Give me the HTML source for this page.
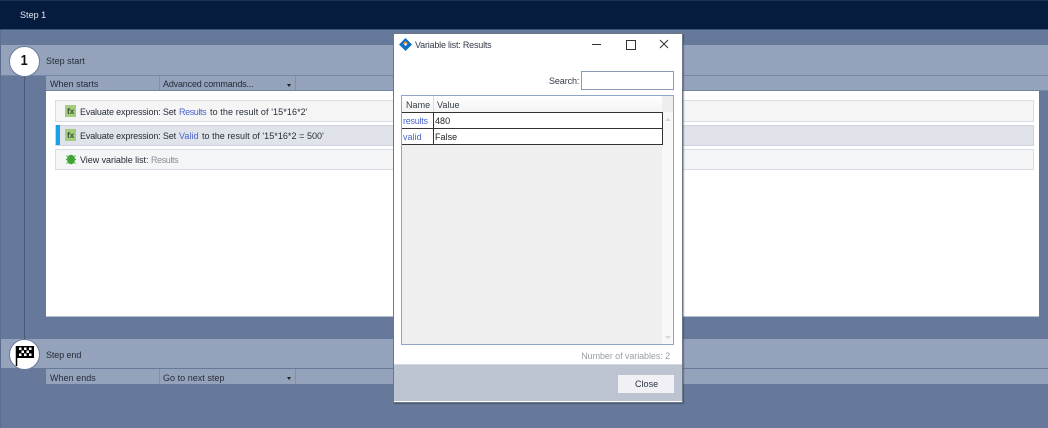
<!DOCTYPE html>
<html><head><meta charset="utf-8"><style>
html,body{margin:0;padding:0}
body{width:1048px;height:428px;overflow:hidden;position:relative;background:#66799b;font-family:"Liberation Sans",sans-serif;font-size:9px;color:#262c38}
div,span.t,svg{position:absolute}
.t{white-space:nowrap;line-height:12px;letter-spacing:.03px}
.b{color:#4a63c8}
.e{letter-spacing:-.15px}
</style></head><body>
<div style="left:0;top:0;width:1048px;height:29px;background:#061c3e;border-top:1px solid #1c3352;box-sizing:border-box"></div>
<div style="left:0;top:29px;width:1048px;height:1px;background:#3f5377"></div>
<div style="left:0;top:30px;width:1px;height:398px;background:#5b6e90"></div>
<span class="t" style="left:20px;top:9px;color:#e4e9f2">Step 1</span>

<div style="left:1px;top:45px;width:1047px;height:30px;background:#94a2bc"></div>
<div style="left:1px;top:75px;width:1047px;height:1px;background:#7485a6"></div>
<div style="left:46px;top:76px;width:1002px;height:14px;background:#94a2bc"></div>
<div style="left:46px;top:90px;width:1002px;height:1px;background:#7485a6"></div>
<div style="left:159px;top:76px;width:1px;height:14px;background:#7f8faf"></div>
<div style="left:295px;top:76px;width:1px;height:14px;background:#7f8faf"></div>
<div style="left:24px;top:75px;width:1px;height:264px;background:#46597b"></div>
<div style="left:9px;top:46px;width:29px;height:29px;border-radius:50%;background:#fff;border:1px solid #6b7c9c;box-sizing:content-box"></div>
<span class="t" style="left:20px;top:53px;font-size:15px;line-height:15px;color:#111;font-weight:bold;transform:scaleX(.85)">1</span>
<span class="t" style="left:46px;top:55px">Step start</span>
<span class="t" style="left:50px;top:78px">When starts</span>
<span class="t" style="left:163px;top:78px;letter-spacing:-.18px">Advanced commands...</span>
<div style="left:287px;top:84px;width:0;height:0;border:2.5px solid transparent;border-top:3px solid #222;border-bottom:0"></div>

<div style="left:46px;top:91px;width:993px;height:225px;background:#fff;border-bottom:1px solid #b4bfd2"></div>

<div style="left:55px;top:100px;width:979px;height:22px;box-sizing:border-box;background:#f5f5f6;border:1px solid #dadde5"></div>
<div style="left:55px;top:125px;width:979px;height:21px;box-sizing:border-box;background:#e0e3ea;border:1px solid #cfd3dd"></div>
<div style="left:56px;top:125px;width:4px;height:20px;background:#18a3e8"></div>
<div style="left:55px;top:149px;width:979px;height:21px;box-sizing:border-box;background:#f4f5f7;border:1px solid #dadde5"></div>

<div style="left:65px;top:105px;width:11px;height:12px;background:#a4cc7e"></div>
<span class="t" style="left:67px;top:105px;font-size:8.500px;font-weight:bold;line-height:12px;color:#3c5530;letter-spacing:-.2px">fx</span>
<div style="left:65px;top:129px;width:11px;height:12px;background:#a4cc7e"></div>
<span class="t" style="left:67px;top:129px;font-size:8.500px;font-weight:bold;line-height:12px;color:#3c5530;letter-spacing:-.2px">fx</span>
<svg style="left:65px;top:154px" width="12" height="11" viewBox="0 0 12 11"><path d="M2.500 2.500 1.500 1.500M9.500 2.500 10.500 1.500M2 5.500H1M10 5.500h1M2.500 8.500 1.500 9.500M9.500 8.500 10.500 9.500" stroke="#4aa53e" stroke-width="1.200"/><ellipse cx="6" cy="5.500" rx="4" ry="4.800" fill="#3fa535"/></svg>

<span class="t e" style="left:80px;top:106px">Evaluate expression: Set</span>
<span class="t b" style="left:179px;top:106px;letter-spacing:-.4px">Results</span>
<span class="t" style="left:210px;top:106px;letter-spacing:.1px">to the result of '15*16*2'</span>
<span class="t e" style="left:80px;top:130px">Evaluate expression: Set</span>
<span class="t b" style="left:179px;top:130px">Valid</span>
<span class="t" style="left:202px;top:130px;letter-spacing:.05px">to the result of '15*16*2 = 500'</span>
<span class="t" style="left:80px;top:154px;letter-spacing:-.05px">View variable list:</span>
<span class="t" style="left:151px;top:154px;color:#8a8f99;letter-spacing:-.4px">Results</span>

<div style="left:1px;top:339px;width:1047px;height:29px;background:#94a2bc"></div>
<div style="left:46px;top:369px;width:1002px;height:15px;background:#94a2bc"></div>
<div style="left:159px;top:369px;width:1px;height:15px;background:#7f8faf"></div>
<div style="left:295px;top:369px;width:1px;height:15px;background:#7f8faf"></div>
<div style="left:9px;top:339px;width:29px;height:29px;border-radius:50%;background:#fff;border:1px solid #6b7c9c"></div>
<svg style="left:15px;top:345px" width="20" height="22" viewBox="0 0 20 22"><path d="M1.500 1v20" stroke="#000" stroke-width="1.500"/><rect x="2" y="1" width="17" height="12" fill="#000"/><g fill="#fff"><rect x="4" y="2.500" width="2.500" height="2.500"/><rect x="9" y="2.500" width="2.500" height="2.500"/><rect x="14" y="2.500" width="2.500" height="2.500"/><rect x="6.500" y="5.500" width="2.500" height="2.500"/><rect x="11.500" y="5.500" width="2.500" height="2.500"/><rect x="4" y="8.500" width="2.500" height="2.500"/><rect x="9" y="8.500" width="2.500" height="2.500"/><rect x="14" y="8.500" width="2.500" height="2.500"/></g></svg>
<span class="t" style="left:46px;top:349px;letter-spacing:-.1px">Step end</span>
<span class="t" style="left:50px;top:372px">When ends</span>
<span class="t" style="left:163px;top:372px">Go to next step</span>
<div style="left:287px;top:377px;width:0;height:0;border:2.5px solid transparent;border-top:3px solid #222;border-bottom:0"></div>

<!-- dialog -->
<div style="left:393px;top:33px;width:290px;height:370px;box-sizing:border-box;background:#fff;border:1px solid #6d7686;box-shadow:1px 1px 1px rgba(40,50,70,.45)"></div>
<div style="left:394px;top:364px;width:288px;height:37px;background:#bdc4d1;border-top:1px solid #d5d9e2;box-sizing:border-box"></div>
<svg style="left:399px;top:38px" width="13" height="13" viewBox="0 0 13 13"><path d="M6.500 0 13 6.500 6.500 13 0 6.500Z" fill="#0f6fc6"/><path d="M6.500 3 9 5.500 8 6.500 6.500 5 5 6.500 4 5.500Z" fill="#f08a1d"/><path d="M6.500 5 8 6.500 6.500 8 5 6.500Z" fill="#fff"/></svg>
<span class="t" style="left:415px;top:39px;color:#333b48;letter-spacing:-.2px">Variable list: Results</span>
<div style="left:592px;top:44px;width:9px;height:1px;background:#333"></div>
<div style="left:626px;top:40px;width:8px;height:8px;border:1px solid #333"></div>
<svg style="left:659px;top:39px" width="10" height="10" viewBox="0 0 10 10"><path d="M1 1 9 9M9 1 1 9" stroke="#333" stroke-width="1"/></svg>

<span class="t" style="left:549px;top:75px;color:#333b48;letter-spacing:-.1px">Search:</span>
<div style="left:581px;top:71px;width:93px;height:19px;box-sizing:border-box;background:#fff;border:1px solid #8b9bb6"></div>

<div style="left:401px;top:95px;width:273px;height:250px;box-sizing:border-box;background:#fff;border:1px solid #8fa6c8"></div>
<div style="left:402px;top:96px;width:260px;height:248px;background:#efefef"></div>
<div style="left:402px;top:96px;width:260px;height:16px;background:linear-gradient(#fff,#f4f4f4)"></div>
<div style="left:662px;top:96px;width:11px;height:16px;background:#eeeeee"></div>
<div style="left:662px;top:112px;width:11px;height:232px;background:#f8f8f8"></div>
<div style="left:665px;top:118px;width:0;height:0;border:3px solid transparent;border-bottom:3px solid #d8d8d8;border-top:0"></div>
<div style="left:665px;top:336px;width:0;height:0;border:3px solid transparent;border-top:3px solid #d8d8d8;border-bottom:0"></div>
<div style="left:433px;top:96px;width:1px;height:16px;background:#dcdcdc"></div>
<span class="t" style="left:406px;top:99px;color:#333b48">Name</span>
<span class="t" style="left:437px;top:99px;color:#333b48">Value</span>

<div style="left:402px;top:113px;width:260px;height:32px;background:#fff"></div>
<div style="left:402px;top:112px;width:260px;height:1px;background:#333"></div>
<div style="left:402px;top:128px;width:260px;height:1px;background:#333"></div>
<div style="left:402px;top:144px;width:261px;height:1px;background:#333"></div>
<div style="left:433px;top:112px;width:1px;height:33px;background:#333"></div>
<div style="left:662px;top:112px;width:1px;height:33px;background:#333"></div>
<span class="t b" style="left:403px;top:115px;letter-spacing:-.25px">results</span>
<span class="t" style="left:435px;top:115px;color:#222">480</span>
<span class="t b" style="left:403px;top:131px">valid</span>
<span class="t" style="left:435px;top:131px;color:#222">False</span>

<span class="t" style="right:378px;top:350px;color:#9a9ea6;letter-spacing:-.08px">Number of variables: 2</span>
<div style="left:618px;top:375px;width:56px;height:18px;background:#f1f1f5;border:0"></div>
<span class="t" style="left:635px;top:378px;color:#2b3240">Close</span>
</body></html>
